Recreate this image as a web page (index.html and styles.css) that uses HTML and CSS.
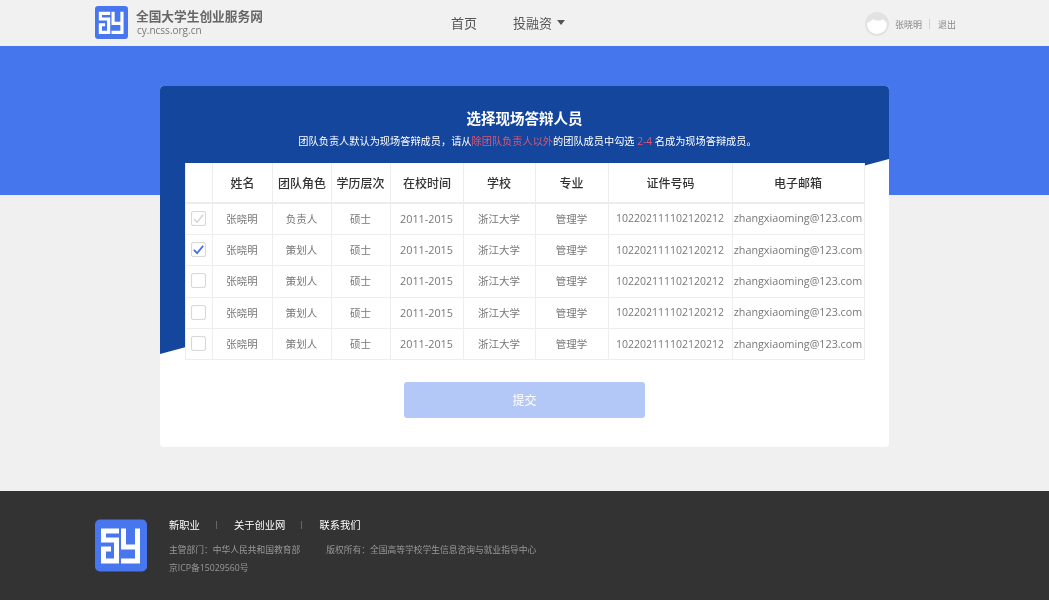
FILE: index.html
```html
<!DOCTYPE html>
<html lang="zh">
<head>
<meta charset="utf-8">
<title>选择现场答辩人员</title>
<link rel="stylesheet" href="styles.css">
</head>
<body>
<header class="top">
  <div class="top-in">
    <div class="brand">
      <svg class="logo logo-s" viewBox="0 0 52 52"><rect width="52" height="52" rx="5" fill="#4876ee"/><path d="M6 9H24V14H11V18H24V44H6V27H16V32H11V39H19V23H6Z M26 9H31V25H40V9H45V44H26V39H40V30H26Z" fill="#fff" fill-rule="evenodd"/></svg>
      <div class="brand-txt"><div class="brand-name">全国大学生创业服务网</div><div class="brand-url">cy.ncss.org.cn</div></div>
    </div>
    <nav class="nav"><a>首页</a><a class="drop">投融资<i class="caret"></i></a></nav>
    <div class="user">
      <svg class="avatar" viewBox="0 0 24 24"><circle cx="12" cy="12" r="11" fill="#fff" stroke="#e2e2e2" stroke-width="2"/><path d="M2 11C3 4 8 1 12 1s9 3 10 10c-2-1-3-3-4-4-2 2-8 2-10 0-1 1-3 3-6 4Z" fill="#e2e2e2"/></svg>
      <span>张晓明</span><i class="sep"></i><span>退出</span>
    </div>
  </div>
</header>
<main class="main">
  <section class="card">
    <div class="card-bg"></div>
    <div class="card-in">
      <h1>选择现场答辩人员</h1>
      <p class="sub">团队负责人默认为现场答辩成员，请从<em>除团队负责人以外</em>的团队成员中勾选 <em>2-4</em> 名成为现场答辩成员。</p>
      <table>
        <thead><tr><th class="c0"></th><th class="c1">姓名</th><th class="c2">团队角色</th><th class="c3">学历层次</th><th class="c4">在校时间</th><th class="c5">学校</th><th class="c6">专业</th><th class="c7">证件号码</th><th class="c8">电子邮箱</th></tr></thead>
        <tbody>
          <tr><td><span class="cb off"><svg viewBox="0 0 14 14"><path d="M2 7.500 5.500 11 12 3" fill="none" stroke="#d4d4d4" stroke-width="1.500"/></svg></span></td><td>张晓明</td><td>负责人</td><td>硕士</td><td class="yr">2011-2015</td><td>浙江大学</td><td>管理学</td><td class="id">102202111102120212</td><td class="mail">zhangxiaoming@123.com</td></tr>
          <tr><td><span class="cb"><svg viewBox="0 0 14 14"><path d="M2 7.500 5.500 11 12 3" fill="none" stroke="#3f6fe8" stroke-width="2"/></svg></span></td><td>张晓明</td><td>策划人</td><td>硕士</td><td class="yr">2011-2015</td><td>浙江大学</td><td>管理学</td><td class="id">102202111102120212</td><td class="mail">zhangxiaoming@123.com</td></tr>
          <tr><td><span class="cb"></span></td><td>张晓明</td><td>策划人</td><td>硕士</td><td class="yr">2011-2015</td><td>浙江大学</td><td>管理学</td><td class="id">102202111102120212</td><td class="mail">zhangxiaoming@123.com</td></tr>
          <tr><td><span class="cb"></span></td><td>张晓明</td><td>策划人</td><td>硕士</td><td class="yr">2011-2015</td><td>浙江大学</td><td>管理学</td><td class="id">102202111102120212</td><td class="mail">zhangxiaoming@123.com</td></tr>
          <tr><td><span class="cb"></span></td><td>张晓明</td><td>策划人</td><td>硕士</td><td class="yr">2011-2015</td><td>浙江大学</td><td>管理学</td><td class="id">102202111102120212</td><td class="mail">zhangxiaoming@123.com</td></tr>
        </tbody>
      </table>
      <button class="submit" type="button">提交</button>
    </div>
  </section>
</main>
<footer class="foot">
  <div class="foot-in">
    <svg class="logo logo-l" viewBox="0 0 52 52"><rect width="52" height="52" rx="5" fill="#4876ee"/><path d="M6 9H24V14H11V18H24V44H6V27H16V32H11V39H19V23H6Z M26 9H31V25H40V9H45V44H26V39H40V30H26Z" fill="#fff" fill-rule="evenodd"/></svg>
    <div class="foot-txt">
      <div class="foot-links"><a>新职业</a><i></i><a>关于创业网</a><i></i><a>联系我们</a></div>
      <div class="foot-line first"><span>主管部门：中华人民共和国教育部</span><span>版权所有：全国高等学校学生信息咨询与就业指导中心</span></div>
      <div class="foot-line">京ICP备15029560号</div>
    </div>
  </div>
</footer>
</body>
</html>
```
FILE: styles.css
```css
* { box-sizing: border-box; }
html, body { margin: 0; padding: 0; }
body {
  width: 1049px;
  height: 600px;
  overflow: hidden;
  font-family: "Open Sans", "Noto Sans CJK SC", sans-serif;
  color: #666;
  background: #f0f0f0;
  display: flex;
  flex-direction: column;
}
.top { height: 46px; background: #f1f1f1; flex: none; }
.top-in { display: flex; align-items: center; height: 46px; padding: 0 93px 0 95px; will-change: transform; }
.brand { display: flex; align-items: center; gap: 8px; width: 356px; }
.logo { display: block; flex: none; }
.logo-s { width: 33px; height: 33px; margin-top: -1px; }
.logo-l { width: 52px; height: 53px; }
.brand-name { font-size: 12.700px; line-height: 15px; font-weight: 700; color: #666; white-space: nowrap; }
.brand-url { font-size: 10px; line-height: 13px; color: #777; padding-left: 1px; }
.nav { display: flex; align-items: center; gap: 36px; font-size: 13px; color: #555; margin-top: -2px; }
.drop { display: flex; align-items: center; }
.caret { width: 0; height: 0; margin-left: 5px; border: 4.500px solid transparent; border-top: 5px solid #555; border-bottom: 0; }
.user { margin: 2px 0 0 auto; display: flex; align-items: center; font-size: 9px; color: #888; }
.avatar { width: 24px; height: 24px; margin-right: 6px; }
.sep { width: 1px; height: 10px; margin: 0 8px 0 7px; background: #d8d0d4; }
.main {
  flex: 1;
  padding-top: 40px;
  background: linear-gradient(#4676ee 149px, #f0f0f0 149px);
}
.card {
  position: relative;
  width: 729px;
  height: 361px;
  margin: 0 auto;
  background: #fff;
  border-radius: 4px;
  overflow: hidden;
}
.card-bg {
  position: absolute;
  inset: 0;
  background: #15469e;
  clip-path: polygon(0 0, 100% 0, 100% 73px, 0 268px);
}
.card-in { position: relative; display: flex; flex-direction: column; align-items: center; padding-top: 22px; will-change: transform; }
h1 { margin: 0; font-size: 14.500px; line-height: 22px; font-weight: 700; color: #fff; }
.sub { margin: 2px 0 0; padding-left: 6px; font-size: 10.200px; line-height: 18px; color: #fff; height: 31px; white-space: nowrap; }
.sub em { font-style: normal; color: #e0556e; }
table { width: 680px; table-layout: fixed; border-collapse: collapse; background: #fff; }
th, td { border: 1px solid #ededed; text-align: center; padding: 0; white-space: nowrap; }
thead tr { height: 40px; }
th { font-size: 12px; font-weight: 500; color: #333; border-top: 0; border-bottom-width: 2px; }
tbody tr { height: 31.400px; }
td { font-size: 10.500px; color: #777; padding-bottom: 1px; }
.yr { font-size: 10.800px; }
.mail { font-size: 10.750px; }
.c0 { width: 27px; } .c1 { width: 60px; } .c2 { width: 59px; } .c3 { width: 59px; } .c4 { width: 73px; }
.c5 { width: 72px; } .c6 { width: 73px; } .c7 { width: 124px; } .c8 { width: 132px; }
.c1, .c2, .c4, .c7 { padding-left: 1px; }
.cb { display: block; width: 15px; height: 15px; margin: 0 auto; background: #fff; border: 1px solid #d8d8d8; border-radius: 2px; box-shadow: inset 0 0 1px #ddd; }
.cb svg { display: block; width: 13px; height: 13px; }
.submit {
  width: 241px;
  height: 36px;
  margin-top: 22px;
  border: 0;
  border-radius: 3px;
  background: #b3c8f7;
  color: #fff;
  font: 12px "Open Sans", "Noto Sans CJK SC", sans-serif;
}
.foot { height: 109px; flex: none; background: #333; }
.foot-in { display: flex; padding: 28px 0 0 95px; gap: 22px; will-change: transform; }
.foot-links { display: flex; align-items: center; font-size: 10.300px; line-height: 12px; color: #fff; }
.foot-links i { width: 1px; height: 8px; margin: 0 17px 0 16px; background: #666; }
.foot-line { font-size: 8.750px; line-height: 12px; color: #999; margin-top: 6px; display: flex; gap: 26px; }
.foot-line.first { margin-top: 13px; }
```
